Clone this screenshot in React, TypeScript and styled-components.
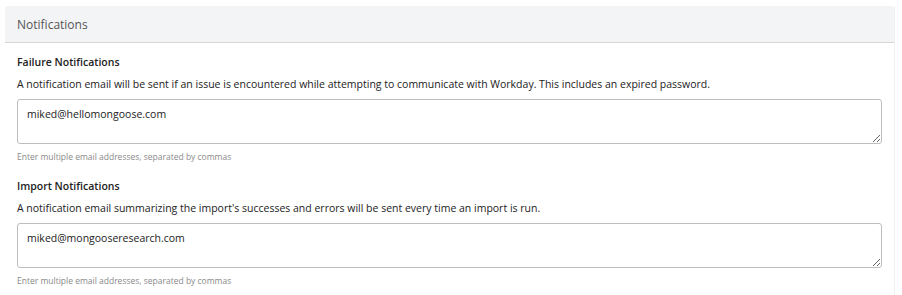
import React from "react";
import styled, { createGlobalStyle } from "styled-components";

const FONT = `"Open Sans", "Noto Sans", "Liberation Sans", sans-serif`;

const Global = createGlobalStyle`
  html, body { margin: 0; padding: 0; background: #fff; }
  body { font-family: ${FONT}; }
  * { box-sizing: border-box; }
`;

const Page = styled.div`
  padding: 6px 7px 0 5px;
`;

const Card = styled.section`
  border-right: 1px solid #f0f0f0;
  background: #fff;
`;

const Header = styled.header`
  height: 37px;
  background: #f3f4f5;
  border-bottom: 1px solid #d6d6d6;
  border-radius: 3px 3px 0 0;
  display: flex;
  align-items: center;
  padding: 0 12px;
  font-size: 12px;
  color: #555;
`;

const Body = styled.div`
  padding: 11px 12px 8px 12px;
  display: flex;
  flex-direction: column;
`;

const Field = styled.div<{ $gap?: number }>`
  display: flex;
  flex-direction: column;
  margin-bottom: ${(p) => p.$gap ?? 0}px;
`;

const Title = styled.div`
  font-size: 10.5px;
  font-weight: 600;
  color: #222;
  line-height: 16px;
`;

const Desc = styled.div`
  font-size: 10.5px;
  color: #222;
  line-height: 16px;
  margin-top: 6px;
`;

const Area = styled.textarea`
  margin-top: 7px;
  width: 865px;
  height: 45px;
  border: 1px solid #bdbdbd;
  border-radius: 3px;
  padding: 6px 9px;
  font-family: ${FONT};
  font-size: 10.5px;
  color: #222;
  line-height: 16px;
  resize: vertical;
  outline: none;
`;

const Help = styled.div`
  margin-top: 7px;
  font-size: 8.5px;
  color: #8a8a8a;
  line-height: 12px;
`;

export default function App() {
  return (
    <>
      <Global />
      <Page>
        <Card>
          <Header>Notifications</Header>
          <Body>
            <Field $gap={15}>
              <Title>Failure Notifications</Title>
              <Desc>
                A notification email will be sent if an issue is encountered while attempting to communicate with Workday. This includes an expired password.
              </Desc>
              <Area defaultValue="miked@hellomongoose.com" />
              <Help>Enter multiple email addresses, separated by commas</Help>
            </Field>
            <Field>
              <Title>Import Notifications</Title>
              <Desc>
                A notification email summarizing the import's successes and errors will be sent every time an import is run.
              </Desc>
              <Area defaultValue="miked@mongooseresearch.com" />
              <Help>Enter multiple email addresses, separated by commas</Help>
            </Field>
          </Body>
        </Card>
      </Page>
    </>
  );
}
